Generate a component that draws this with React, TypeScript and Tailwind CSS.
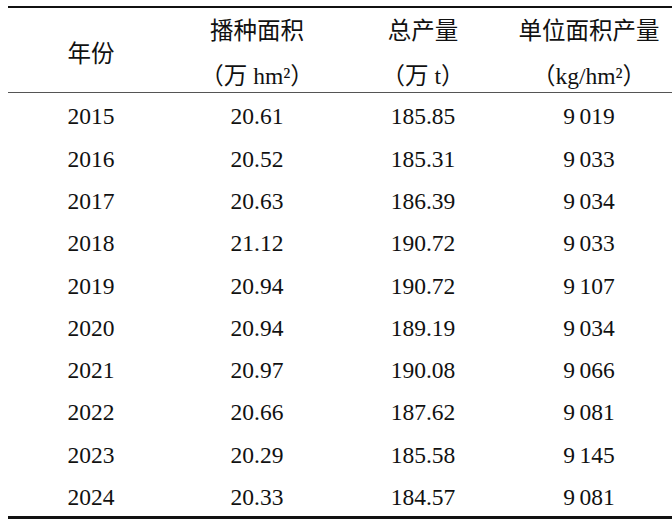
import React from "react";

const rows: [string, string, string, string][] = [
  ["2015", "20.61", "185.85", "9\u2009019"],
  ["2016", "20.52", "185.31", "9\u2009033"],
  ["2017", "20.63", "186.39", "9\u2009034"],
  ["2018", "21.12", "190.72", "9\u2009033"],
  ["2019", "20.94", "190.72", "9\u2009107"],
  ["2020", "20.94", "189.19", "9\u2009034"],
  ["2021", "20.97", "190.08", "9\u2009066"],
  ["2022", "20.66", "187.62", "9\u2009081"],
  ["2023", "20.29", "185.58", "9\u2009145"],
  ["2024", "20.33", "184.57", "9\u2009081"],
];

export default function App() {
  return (
    <div
      className="w-[672px] h-[519px] bg-white pl-[8px] pt-[6px] text-[#111] overflow-hidden"
      style={{ fontFamily: '"Liberation Serif", "Noto Sans CJK SC", serif' }}
    >
      <div className="border-t-[2.5px] border-[#111]">
        <div className="grid grid-cols-4 h-[85px] border-b border-[#555] text-[23.5px] leading-[44px] text-center pt-[1px]">
          <div className="flex items-center justify-center">年份</div>
          <div className="flex flex-col">
            <span>播种面积</span>
            <span className="pt-[1px]">（万 hm²）</span>
          </div>
          <div className="flex flex-col">
            <span>总产量</span>
            <span className="pt-[1px]">（万 t）</span>
          </div>
          <div className="flex flex-col">
            <span>单位面积产量</span>
            <span className="pt-[1px]">（kg/hm²）</span>
          </div>
        </div>
        {rows.map((r) => (
          <div
            key={r[0]}
            className="grid grid-cols-4 h-[42.3px] items-center text-center text-[23.5px] leading-none pt-[6px]"
          >
            {r.map((c, i) => (
              <div key={i}>{c}</div>
            ))}
          </div>
        ))}
        <div className="border-t-[3px] border-[#111]" />
      </div>
    </div>
  );
}
